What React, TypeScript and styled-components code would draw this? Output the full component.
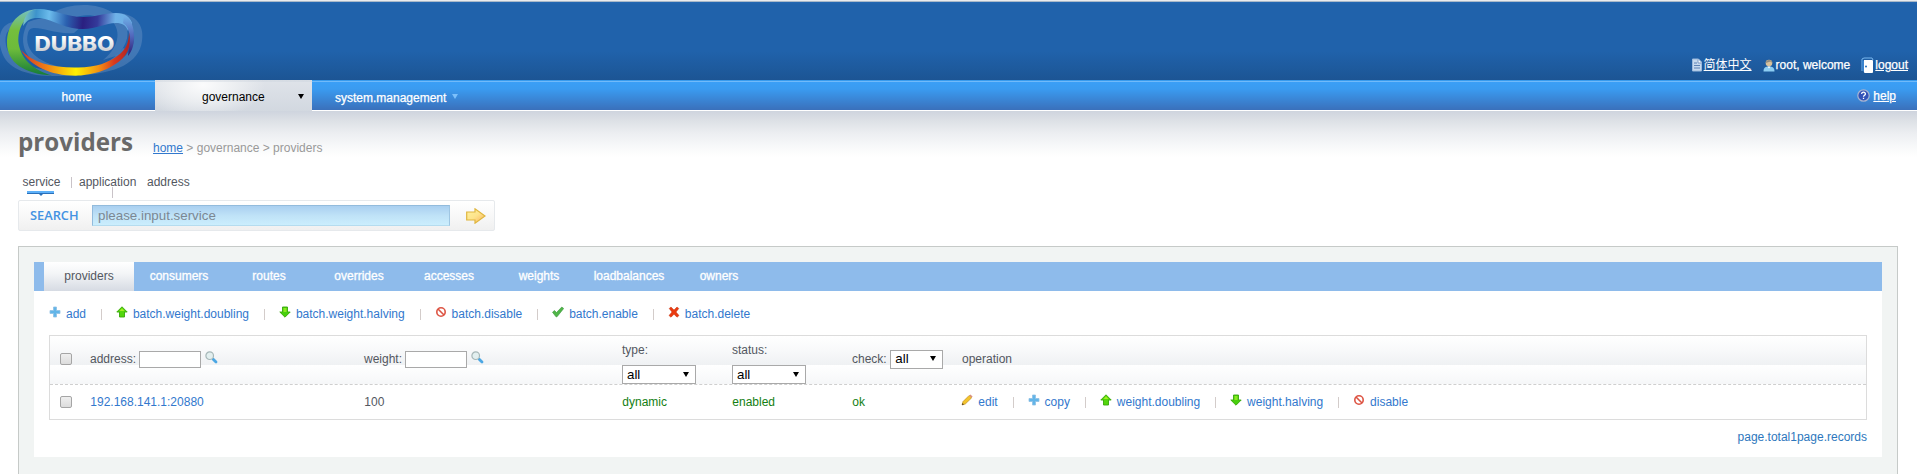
import React from "react";
import styled, { createGlobalStyle } from "styled-components";

const GlobalStyle = createGlobalStyle`
  * { box-sizing: border-box; }
  body {
    margin: 0;
    background: #fff;
    font: 12px/18px "Liberation Sans", Arial, "Noto Sans CJK SC", sans-serif;
    color: #53575f;
    overflow: hidden;
  }
  a { color: #3278cd; text-decoration: none; }
`;

const Page = styled.div`
  height: 474px;
  overflow: hidden;
  display: flex;
  flex-direction: column;
`;

/* ---------- top banner ---------- */

const Banner = styled.header`
  flex: none;
  height: 80px;
  display: flex;
  justify-content: space-between;
  border-top: 1px solid #e9ebee;
  background: linear-gradient(#a9b9c9 0 1px, #2468b4 1px, #2062ab 3px, #2062ab 50px, #1c5594 100%);
`;

const Logo = styled.svg`
  display: block;
`;

const UserBar = styled.div`
  align-self: flex-end;
  display: flex;
  align-items: center;
  height: 18px;
  margin: 0 9px 6px 0;
  color: #fff;
  -webkit-text-stroke: 0.25px #fff;
`;

const UserItem = styled.span<{ $after?: number }>`
  display: flex;
  align-items: center;
  gap: 1px;
  margin-right: ${(p) => p.$after ?? 0}px;
  white-space: nowrap;
`;

const LightLink = styled.a`
  color: #fff;
  text-decoration: underline;
`;

const Chinese = styled(LightLink)`
  -webkit-text-stroke: 0;
`;

/* ---------- main navigation ---------- */

const Nav = styled.nav`
  flex: none;
  height: 31px;
  display: flex;
  border-bottom: 1px solid #fff;
  background: linear-gradient(#389bed 0 1px, #70baf9 1px 2px, #3a9ff6 2px, #3a9bf0 9px, #3a70bb 30px);
  color: #fff;
  -webkit-text-stroke: 0.25px #fff;
`;

const NavItem = styled.div<{ $width: number; $active?: boolean; $drop?: number }>`
  width: ${(p) => p.$width}px;
  height: ${(p) => (p.$active ? 31 : 30)}px;
  display: flex;
  align-items: center;
  padding-top: ${(p) => 3 + (p.$drop ?? 0)}px;
  ${(p) =>
    p.$active &&
    `color: #000;
     -webkit-text-stroke: 0;
     background:
       linear-gradient(rgba(200,208,218,.35) 0 2px, transparent 2px),
       radial-gradient(ellipse 62px 34px at 48px 5px, #fbfbfc 0, rgba(240,242,244,.8) 50%, transparent 100%),
       linear-gradient(#dfe3e9, #d2d8e0);`}
`;

const NavText = styled.span<{ $left: number }>`
  margin-left: ${(p) => p.$left}px;
`;

const Caret = styled.i<{ $left: number; $color: string; $lift?: number }>`
  margin: ${(p) => -(p.$lift ?? 0)}px 0 0 ${(p) => p.$left}px;
  border: 3px solid transparent;
  border-top: 5px solid ${(p) => p.$color};
  border-bottom: 0;
`;

const HelpItem = styled.div`
  margin-left: auto;
  margin-right: 21px;
  padding-top: 1px;
  display: flex;
  align-items: center;
  gap: 3px;
`;

/* ---------- title area ---------- */

const TitleArea = styled.section`
  flex: none;
  height: 135px;
  padding: 0 18px;
  background: linear-gradient(#ced4de 0, #dde1e6 10px, #eceef1 22px, #f8f9fa 36px, #fff 46px);
`;

const TitleRow = styled.div`
  display: flex;
  align-items: flex-start;
  height: 59px;
  padding-top: 14px;
`;

const Title = styled.h1`
  margin: 0;
  width: 135px;
  font: 700 24.2px/34px "Open Sans", "Noto Sans", sans-serif;
  color: #696969;
`;

const Crumbs = styled.div`
  padding-top: 14px;
  color: #999;
  a { text-decoration: underline; }
`;

const SearchTabs = styled.div`
  display: flex;
  height: 30px;
  padding: 3px 0 0 4px;
`;

const SearchTab = styled.span<{ $width: number; $active?: boolean }>`
  width: ${(p) => p.$width}px;
  height: 18px;
  padding-left: ${(p) => (p.$active ? 0.5 : 1)}px;
  position: relative;
  white-space: nowrap;
  ${(p) =>
    p.$active &&
    `&::before {
      content: "";
      position: absolute;
      left: 5px;
      top: 18px;
      width: 27px;
      height: 3px;
      background: linear-gradient(#5db0f8 0 2px, #2a70ba 2px);
    }
    &::after {
      content: "";
      position: absolute;
      left: 17px;
      top: 21px;
      border: 2px solid transparent;
      border-top-color: #2a70ba;
      border-bottom: 0;
    }`}
`;

const TabRule = styled.i`
  width: 1px;
  height: 11px;
  margin: 4px 6px 0 10px;
  background: #c9c3c8;
`;

const DropRule = styled.i`
  position: absolute;
  left: 34px;
  top: 14px;
  width: 1px;
  height: 11px;
  background: #c9c3c8;
`;

const SearchBar = styled.div`
  width: 477px;
  height: 31px;
  display: flex;
  align-items: center;
  border: 1px solid #e6e9ec;
  border-radius: 2px;
  background: linear-gradient(#fff, #f8f8f8 50%, #f0f0f0);
`;

const SearchLabel = styled.strong`
  width: 73px;
  padding-left: 11px;
  margin-top: -2px;
  font: 600 12.8px/18px "Open Sans", "Noto Sans", sans-serif;
  color: #4492e2;
`;

const SearchInput = styled.input`
  width: 358px;
  height: 21px;
  padding: 0 5px;
  border: 1px solid;
  border-color: #92bbdc #9fc6e2 #b5dcef #92bbdc;
  outline: none;
  background: linear-gradient(#a9cff0, #bfe2f7 50%, #cbeefd);
  font: 13.33px "Liberation Sans", Arial, sans-serif;
  &::placeholder { color: #7b8793; }
`;

const GoIcon = styled.svg`
  margin-left: 16px;
`;

/* ---------- content panel ---------- */

const Panel = styled.main`
  flex: none;
  width: 1880px;
  height: 240px;
  margin-left: 18px;
  padding: 15px;
  border: 1px solid #c6cac8;
  background: #f1f4f3;
`;

const Sheet = styled.div`
  height: 195px;
  background: #fff;
`;

const TabStrip = styled.div`
  display: flex;
  height: 29px;
  padding-left: 10px;
  background: #8ebbeb;
`;

const Tab = styled.span<{ $active?: boolean }>`
  width: 90px;
  line-height: 28px;
  text-align: center;
  color: ${(p) => (p.$active ? "#53575f" : "#fff")};
  -webkit-text-stroke: ${(p) => (p.$active ? "0" : "0.3px #fff")};
  background: ${(p) => (p.$active ? "linear-gradient(#fff, #f3f5f7 40%, #d6dbe3)" : "none")};
`;

const SheetBody = styled.div`
  padding: 0 15px;
`;

const Actions = styled.div<{ $height: number }>`
  display: flex;
  align-items: center;
  height: ${(p) => p.$height}px;
`;

const ActionLink = styled.a`
  display: flex;
  align-items: center;
  white-space: nowrap;
  & + & { margin-left: 15px; }
  & + &::before {
    content: "";
    width: 1px;
    height: 11px;
    margin-right: 14.9px;
    background: #d3ccca;
  }
  svg { width: 12px; height: 12px; margin: -4px 5px 0 -1px; }
`;

const ToolRow = styled.div`
  height: 44px;
  padding: 1px 0 0 1px;
`;

const Table = styled.div`
  border: 1px solid #dcdcdc;
`;

const TableRow = styled.div<{ $head?: boolean }>`
  display: grid;
  grid-template-columns: 30px 274px 258px 110px 120px 110px 1fr;
  height: ${(p) => (p.$head ? 49 : 34)}px;
  border-bottom: ${(p) => (p.$head ? "1px dashed #cfcfcf" : "0")};
  background: ${(p) => (p.$head ? "linear-gradient(#fff, #f8f9fa 50%, #eff1f3) 0 0 / 100% 29px" : "#fff")};
  ${(p) => p.$head && "background-clip: padding-box;"}
`;

const Cell = styled.div<{ $green?: boolean }>`
  display: flex;
  align-items: center;
  padding: 0 0 0 10.300px;
  white-space: nowrap;
  color: ${(p) => (p.$green ? "#138013" : "inherit")};
`;

const HeadCell = styled(Cell)`
  height: 46px;
  padding-left: 10px;
`;

const StackCell = styled.div`
  padding: 5px 0 0 10px;
`;

const CheckBox = styled.span`
  flex: none;
  width: 12px;
  height: 12px;
  margin-left: -0.4px;
  border: 1px solid #a5a5a5;
  border-radius: 2px;
  background: linear-gradient(#efefef, #dcdcdc);
`;

const FilterInput = styled.input`
  width: 62px;
  height: 17px;
  margin: 0 4px 0 2.6px;
  padding: 0 2px;
  border: 1px solid #a9a9a9;
  outline: none;
`;

const SelectBox = styled.div<{ $width: number }>`
  display: flex;
  align-items: center;
  justify-content: space-between;
  width: ${(p) => p.$width}px;
  height: 19px;
  padding: 0 6px 0 4px;
  border: 1px solid #a9a9a9;
  background: #fff;
  color: #000;
  font-size: 13.33px;
`;

const Stacked = styled.div`
  margin-top: 6px;
`;

const Beside = styled.div`
  margin-left: 3.6px;
`;

const Pager = styled.div`
  padding-top: 8px;
  text-align: right;
  color: #2d77bd;
`;

/* ---------- icons ---------- */

const PlusIcon = () => (
  <svg viewBox="0 0 12 12"><path d="M4.500 1h3v3.500H11v3H7.500V11h-3V7.500H1v-3h3.500z" fill="#62b5e8" stroke="#8fc0e4" strokeWidth=".8" /></svg>
);
const UpIcon = () => (
  <svg viewBox="0 0 12 12"><path d="M6 .8 11.200 6H8.500v5h-5V6H.8z" fill="#53d60c" stroke="#38a80a" strokeWidth=".9" strokeLinejoin="round" /><path d="M6 2.200 8.500 5h-5z" fill="#a5ef22" /></svg>
);
const DownIcon = () => (
  <svg viewBox="0 0 12 12"><path d="M6 11.200.8 6h2.700V1h5v5h2.700z" fill="#48cf0c" stroke="#38a80a" strokeWidth=".9" strokeLinejoin="round" /><path d="M4.500 2h3v4h-3z" fill="#8bea20" /></svg>
);
const BanIcon = () => (
  <svg viewBox="0 0 12 12" fill="none" stroke="#dd5443" strokeWidth="1.600"><circle cx="6" cy="6" r="4.200" /><path d="m3 3 6 6" /></svg>
);
const TickIcon = () => (
  <svg viewBox="0 0 12 12"><path d="m.5 6.200 2-1.700 2 2L9.800 1l1.900 1.500L5 10.800H4z" fill="#4fb548" stroke="#3a963b" strokeWidth=".6" /></svg>
);
const CrossIcon = () => (
  <svg viewBox="0 0 12 12"><path d="M1.200 2.500 3 1l3 3 3-3 1.800 1.500L8 6l3 3.500L9 11.200l-3-3-3 3L1 9.500 4 6z" fill="#ea3b10" stroke="#c5330f" strokeWidth=".5" /></svg>
);
const PencilIcon = () => (
  <svg viewBox="0 0 12 12"><path d="m1 11 1-3.400L8.200 1.400l2.500 2.400L4.300 10z" fill="#f3c42c" stroke="#b98316" strokeWidth=".6" /><path d="m8.200 1.400 1.200-1 2.200 2-1 1.300z" fill="#d9917c" /><path d="m1 11 .6-2 1.300 1.400z" fill="#443322" /></svg>
);
const Lens = styled.svg`
  margin-top: -4px;
`;
const LensIcon = () => (
  <Lens width="13" height="13" viewBox="0 0 13 13"><path d="m8.200 8.200 2.800 2.800" stroke="#4ba7e4" strokeWidth="2.800" strokeLinecap="round" /><circle cx="4.700" cy="4.700" r="3.800" fill="#e2efef" stroke="#a6b7b8" strokeWidth="1.200" /></Lens>
);

const DubboLogo = () => (
  <Logo width="146" height="79" viewBox="0 1 146 79">
    <defs>
      <linearGradient id="green" x1="0" y1="0" x2="0" y2="1">
        <stop offset="0" stopColor="#74bfc9" /><stop offset=".32" stopColor="#74be3c" />
        <stop offset=".6" stopColor="#6dbb3b" /><stop offset="1" stopColor="#147b38" />
      </linearGradient>
      <linearGradient id="blue" gradientUnits="userSpaceOnUse" x1="24" y1="0" x2="134" y2="10">
        <stop offset="0" stopColor="#7fc8c2" /><stop offset=".12" stopColor="#3d93cb" />
        <stop offset=".24" stopColor="#6cbcec" /><stop offset=".4" stopColor="#2b61b0" />
        <stop offset=".55" stopColor="#2a1f80" /><stop offset=".68" stopColor="#343a9a" />
        <stop offset=".84" stopColor="#6fb2e8" /><stop offset="1" stopColor="#6aaee6" />
      </linearGradient>
      <linearGradient id="side" x1="0" y1="0" x2="0" y2="1">
        <stop offset="0" stopColor="#70b4ea" /><stop offset=".5" stopColor="#5269bd" /><stop offset="1" stopColor="#2c1b73" />
      </linearGradient>
      <linearGradient id="fire" gradientUnits="userSpaceOnUse" x1="20" y1="0" x2="132" y2="0">
        <stop offset="0" stopColor="#cc3328" /><stop offset=".22" stopColor="#ef7a16" />
        <stop offset=".5" stopColor="#fff000" /><stop offset=".7" stopColor="#f49212" />
        <stop offset=".84" stopColor="#d93a1e" /><stop offset="1" stopColor="#a92026" />
      </linearGradient>
      <linearGradient id="silver" x1="0" y1="0" x2="0" y2="1">
        <stop offset=".3" stopColor="#fff" /><stop offset=".9" stopColor="#c4c7cb" />
      </linearGradient>
    </defs>
    <g fill="#b7c9e4" fillOpacity=".22" fillRule="evenodd">
      <path d="M14 22C-2 24-3 42 3 55c7 16 30 22 57 21 37-1 61-9 67-26l-4-2c-12 16-31 23-58 23C30 71 8 60 6 45 4 34 8 26 19 27z" />
      <path d="M53 13C68 3 97 2 113 13c20-1 32 10 29 28-3 23-28 32-58 34 28-6 47-19 50-34 2-16-10-20-23-18-10-8-28-10-36-5z" />
      <path d="M28 22c-12 22-2 43 28 49l12-3C42 65 23 52 28 33c3-12 22 2 46 0l10-9c-18-2-31-12-56-2z" />
      <path d="M113 22c10 13 2 29-10 38l13-4c13-12 14-24 8-36z" />
    </g>
    <path d="M42 9C19 8 7 24 7 43c0 20 18 31 45 32.500C34 70 21 60 18.500 43 17.500 28 24 15 42 9z" fill="url(#green)" />
    <path d="M23 26C24 14 31 9 39 9c13 0 28 8 44 8 14 0 20-4 33-4 9 0 14 4 16 10l-4 8c-2-6-6-8-12-8-11 0-19 6-33 6-21 0-31-11-46-11-6 0-10 2-14 8z" fill="url(#blue)" />
    <path d="M124 15c8 4 10 13 10 22 0 8-2 14-6 19 2-14 4-27-5-33z" fill="url(#side)" />
    <path d="M129 32c3 16-2 25-15 33-9 6-20 9-33 10.500C53 77 31 67 21 50c12 13 32 18 57 17.500 18 0 31-5 40-12 8-6 11-13 11-23.500z" fill="url(#fire)" />
    <text x="34.500" y="50.500" textLength="80" lengthAdjust="spacingAndGlyphs" fontFamily="Inter, sans-serif" fontWeight="800" fontSize="20.500" fill="url(#silver)">DUBBO</text>
  </Logo>
);

const PageIcon = () => (
  <svg width="12" height="14" viewBox="0 0 12 14"><path d="M1.500 1h6l3 3v9h-9z" fill="#c6d9ee" stroke="#9bb9dc" /><path d="M7 1.500V5h3.500" fill="#fff" stroke="#7898c5" /><path d="M3 5h3M3 7.500h6M3 10h6" stroke="#5d82b5" /></svg>
);
const PersonIcon = () => (
  <svg width="12" height="13" viewBox="0 0 12 13"><path d="M.5 12.500c0-4 2-5 5.500-5s5.500 1 5.500 5z" fill="#8dcdf2" /><circle cx="6" cy="4" r="3.300" fill="#d8c19c" /><path d="M2.700 4C2.500 0 9.500 0 9.300 4L7.500 2.500z" fill="#8e8c83" /><path d="m4.500 7.500 1.500 2 1.500-2z" fill="#fff" /></svg>
);
const DoorIcon = () => (
  <svg width="13" height="17" viewBox="0 0 13 17"><path d="M1 14V2l2-1h8l1 2" fill="none" stroke="#79b7ee" /><path d="M3 3h8q1 0 1 1v11q0 1-1 1H4q-1 0-1-1z" fill="#fff" /><path d="M1 2.500 3 4v11l-2-2z" fill="#3a83cd" /><circle cx="5" cy="9.500" r="1" fill="#246cb7" /></svg>
);
const QuestionIcon = () => (
  <svg width="13" height="13" viewBox="0 0 13 13"><circle cx="6.500" cy="6.500" r="5.700" fill="#3352b8" stroke="#a8b4d2" strokeWidth="1.200" /><path d="M4.700 5c0-2.500 3.800-2.300 3.700-.1 0 1.300-1.900 1.300-1.900 2.900M6.500 8.800v1.300" fill="none" stroke="#fff" strokeWidth="1.300" /></svg>
);

/* ---------- data ---------- */

const tabs = ["providers", "consumers", "routes", "overrides", "accesses", "weights", "loadbalances", "owners"];

const toolbar: [React.FC, string][] = [
  [PlusIcon, "add"],
  [UpIcon, "batch.weight.doubling"],
  [DownIcon, "batch.weight.halving"],
  [BanIcon, "batch.disable"],
  [TickIcon, "batch.enable"],
  [CrossIcon, "batch.delete"],
];

const operations: [React.FC, string][] = [
  [PencilIcon, "edit"],
  [PlusIcon, "copy"],
  [UpIcon, "weight.doubling"],
  [DownIcon, "weight.halving"],
  [BanIcon, "disable"],
];

const ActionList = ({ items, height }: { items: [React.FC, string][]; height: number }) => (
  <Actions $height={height}>
    {items.map(([Icon, label]) => (
      <ActionLink key={label}>
        <Icon />
        {label}
      </ActionLink>
    ))}
  </Actions>
);

const Select = ({ width }: { width: number }) => (
  <SelectBox $width={width}>
    all
    <Caret $left={0} $color="#000" $lift={1} />
  </SelectBox>
);

export default function App() {
  return (
    <Page>
      <GlobalStyle />
      <Banner>
        <DubboLogo />
        <UserBar>
          <UserItem $after={11}><PageIcon /><Chinese>简体中文</Chinese></UserItem>
          <UserItem $after={11}><PersonIcon />root, welcome</UserItem>
          <UserItem><DoorIcon /><LightLink>logout</LightLink></UserItem>
        </UserBar>
      </Banner>
      <Nav>
        <NavItem $width={155}><NavText $left={61.600}>home</NavText></NavItem>
        <NavItem $width={157} $active>
          <NavText $left={47}>governance</NavText>
          <Caret $left={33} $color="#000" $lift={1} />
        </NavItem>
        <NavItem $width={160} $drop={2}>
          <NavText $left={23}>system.management</NavText>
          <Caret $left={6} $color="#7cc0fb" $lift={3} />
        </NavItem>
        <HelpItem><QuestionIcon /><LightLink>help</LightLink></HelpItem>
      </Nav>
      <TitleArea>
        <TitleRow>
          <Title>providers</Title>
          <Crumbs><a>home</a> &gt; governance &gt; providers</Crumbs>
        </TitleRow>
        <SearchTabs>
          <SearchTab $width={39} $active>service</SearchTab>
          <TabRule />
          <SearchTab $width={68}>application<DropRule /></SearchTab>
          <SearchTab $width={50}>address</SearchTab>
        </SearchTabs>
        <SearchBar>
          <SearchLabel>SEARCH</SearchLabel>
          <SearchInput placeholder="please.input.service" />
          <GoIcon width="20" height="16" viewBox="0 0 20 16">
            <defs>
              <linearGradient id="go" x1="0" y1="0" x2="1" y2="1">
                <stop offset="0" stopColor="#fff2a0" /><stop offset=".5" stopColor="#fde48c" /><stop offset="1" stopColor="#fbae5c" />
              </linearGradient>
            </defs>
            <path d="M.7 4H9V.8L19 8 9 15.200V12H.7z" fill="url(#go)" stroke="#dfb63f" strokeWidth="1.200" />
          </GoIcon>
        </SearchBar>
      </TitleArea>
      <Panel>
        <Sheet>
          <TabStrip>
            {tabs.map((t, i) => <Tab key={t} $active={i === 0}>{t}</Tab>)}
          </TabStrip>
          <SheetBody>
            <ToolRow><ActionList items={toolbar} height={44} /></ToolRow>
            <Table>
              <TableRow $head>
                <HeadCell><CheckBox /></HeadCell>
                <HeadCell>address:<FilterInput /><LensIcon /></HeadCell>
                <HeadCell>weight:<FilterInput /><LensIcon /></HeadCell>
                <StackCell>type:<Stacked><Select width={74} /></Stacked></StackCell>
                <StackCell>status:<Stacked><Select width={74} /></Stacked></StackCell>
                <HeadCell>check:<Beside><Select width={53} /></Beside></HeadCell>
                <HeadCell>operation</HeadCell>
              </TableRow>
              <TableRow>
                <Cell><CheckBox /></Cell>
                <Cell><a>192.168.141.1:20880</a></Cell>
                <Cell>100</Cell>
                <Cell $green>dynamic</Cell>
                <Cell $green>enabled</Cell>
                <Cell $green>ok</Cell>
                <Cell><ActionList items={operations} height={34} /></Cell>
              </TableRow>
            </Table>
            <Pager>page.total1page.records</Pager>
          </SheetBody>
        </Sheet>
      </Panel>
    </Page>
  );
}
